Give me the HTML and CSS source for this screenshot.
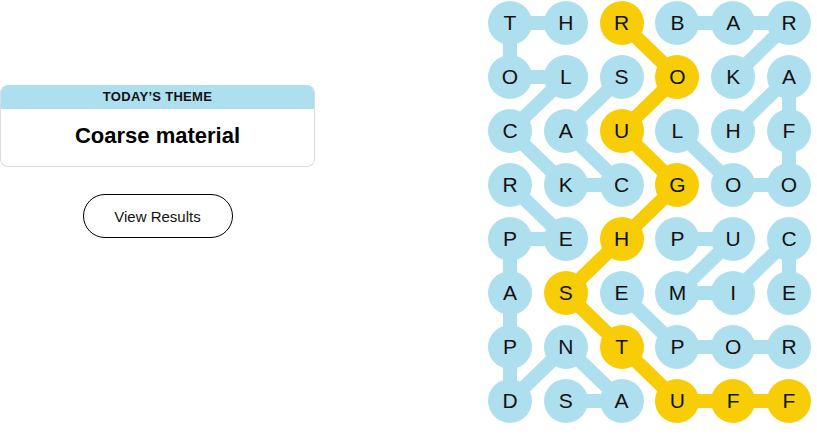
FILE: index.html
```html
<!DOCTYPE html>
<html lang="en">
  <head>
    <meta charset="UTF-8" />
    <meta name="viewport" content="width=device-width, initial-scale=1.0" />
    <title>Strands</title>
    <link rel="stylesheet" href="styles.css">
  </head>

  <body>
    <div class="page">
      <div class="side">
        <div class="theme">
          <h2 class="theme-label">Today’s Theme</h2>
          <p class="theme-text">Coarse material</p>
        </div>
        <button class="btn">View Results</button>
      </div>

      <div class="board">
        <svg class="links" width="323" height="422" viewBox="0 0 323 422">
          <g class="blue">
            <line x1="22" y1="22" x2="77.8" y2="22" />
            <line x1="22" y1="22" x2="22" y2="76" />
            <line x1="189.4" y1="22" x2="245.2" y2="22" />
            <line x1="245.2" y1="22" x2="301" y2="22" />
            <line x1="301" y1="22" x2="245.2" y2="76" />
            <line x1="22" y1="76" x2="77.8" y2="76" />
            <line x1="77.8" y1="76" x2="22" y2="130" />
            <line x1="133.6" y1="76" x2="77.8" y2="130" />
            <line x1="301" y1="76" x2="245.2" y2="130" />
            <line x1="301" y1="76" x2="301" y2="130" />
            <line x1="22" y1="130" x2="77.8" y2="184" />
            <line x1="77.8" y1="130" x2="133.6" y2="184" />
            <line x1="189.4" y1="130" x2="245.2" y2="184" />
            <line x1="301" y1="130" x2="301" y2="184" />
            <line x1="77.8" y1="184" x2="133.6" y2="184" />
            <line x1="245.2" y1="184" x2="301" y2="184" />
            <line x1="22" y1="184" x2="77.8" y2="238" />
            <line x1="22" y1="238" x2="77.8" y2="238" />
            <line x1="22" y1="238" x2="22" y2="292" />
            <line x1="189.4" y1="238" x2="245.2" y2="238" />
            <line x1="245.2" y1="238" x2="189.4" y2="292" />
            <line x1="301" y1="238" x2="245.2" y2="292" />
            <line x1="301" y1="238" x2="301" y2="292" />
            <line x1="189.4" y1="292" x2="245.2" y2="292" />
            <line x1="22" y1="292" x2="22" y2="346" />
            <line x1="133.6" y1="292" x2="189.4" y2="346" />
            <line x1="189.4" y1="346" x2="245.2" y2="346" />
            <line x1="245.2" y1="346" x2="301" y2="346" />
            <line x1="22" y1="346" x2="22" y2="400" />
            <line x1="77.8" y1="346" x2="22" y2="400" />
            <line x1="77.8" y1="346" x2="133.6" y2="400" />
            <line x1="77.8" y1="400" x2="133.6" y2="400" />
          </g>
          <polyline class="gold"
            points="133.6,22 189.4,76 133.6,130 189.4,184 133.6,238 77.8,292 133.6,346 189.4,400 245.2,400 301,400" />
        </svg>

        <div class="grid">
          <span class="cell">T</span><span class="cell">H</span><span class="cell found">R</span><span class="cell">B</span><span class="cell">A</span><span class="cell">R</span>
          <span class="cell">O</span><span class="cell">L</span><span class="cell">S</span><span class="cell found">O</span><span class="cell">K</span><span class="cell">A</span>
          <span class="cell">C</span><span class="cell">A</span><span class="cell found">U</span><span class="cell">L</span><span class="cell">H</span><span class="cell">F</span>
          <span class="cell">R</span><span class="cell">K</span><span class="cell">C</span><span class="cell found">G</span><span class="cell">O</span><span class="cell">O</span>
          <span class="cell">P</span><span class="cell">E</span><span class="cell found">H</span><span class="cell">P</span><span class="cell">U</span><span class="cell">C</span>
          <span class="cell">A</span><span class="cell found">S</span><span class="cell">E</span><span class="cell">M</span><span class="cell">I</span><span class="cell">E</span>
          <span class="cell">P</span><span class="cell">N</span><span class="cell found">T</span><span class="cell">P</span><span class="cell">O</span><span class="cell">R</span>
          <span class="cell">D</span><span class="cell">S</span><span class="cell">A</span><span class="cell found">U</span><span class="cell found">F</span><span class="cell found">F</span>
        </div>
      </div>
    </div>
  </body>
</html>
```

FILE: styles.css
```css
* {
  margin: 0;
  padding: 0;
  box-sizing: border-box;
}

body {
  background: #fff;
  color: #121212;
  font-family: "Liberation Sans", Arial, sans-serif;
}

.page {
  display: flex;
  width: 817px;
  height: 434px;
  gap: 173px;
}

.side {
  width: 315px;
  padding-top: 85px;
  display: flex;
  flex-direction: column;
  align-items: center;
}

.theme {
  width: 100%;
  border: 1px solid #dcdcdc;
  border-top: none;
  border-radius: 8px;
  overflow: hidden;
}

.theme-label {
  height: 24px;
  line-height: 24px;
  background-color: #aedfee;
  text-align: center;
  font-size: 13px;
  font-weight: 700;
  letter-spacing: 0.3px;
  text-transform: uppercase;
}

.theme-text {
  height: 57px;
  line-height: 54px;
  text-align: center;
  font-size: 22px;
  font-weight: 700;
  color: #000;
}

.btn {
  margin-top: 27px;
  width: 150px;
  height: 44px;
  border: 1px solid #000;
  border-radius: 22px;
  background: #fff;
  color: #121212;
  font-family: "Liberation Sans", Arial, sans-serif;
  font-size: 15px;
}

.board {
  position: relative;
  margin-top: 1px;
  width: 323px;
  height: 422px;
}

.links {
  position: absolute;
  top: 0;
  left: 0;
}

.links line,
.links polyline {
  stroke-width: 14;
  stroke-linecap: round;
  fill: none;
}

.blue line {
  stroke: #aedfee;
}

.gold {
  stroke: #f8cd05;
  stroke-linejoin: round;
}

.grid {
  position: relative;
  display: grid;
  grid-template-columns: repeat(6, 44px);
  grid-auto-rows: 44px;
  column-gap: 11.8px;
  row-gap: 10px;
}

.cell {
  display: flex;
  align-items: center;
  justify-content: center;
  border-radius: 50%;
  background-color: #aedfee;
  font-size: 21px;
  color: #121212;
}

.cell.found {
  background-color: #f8cd05;
}
```
